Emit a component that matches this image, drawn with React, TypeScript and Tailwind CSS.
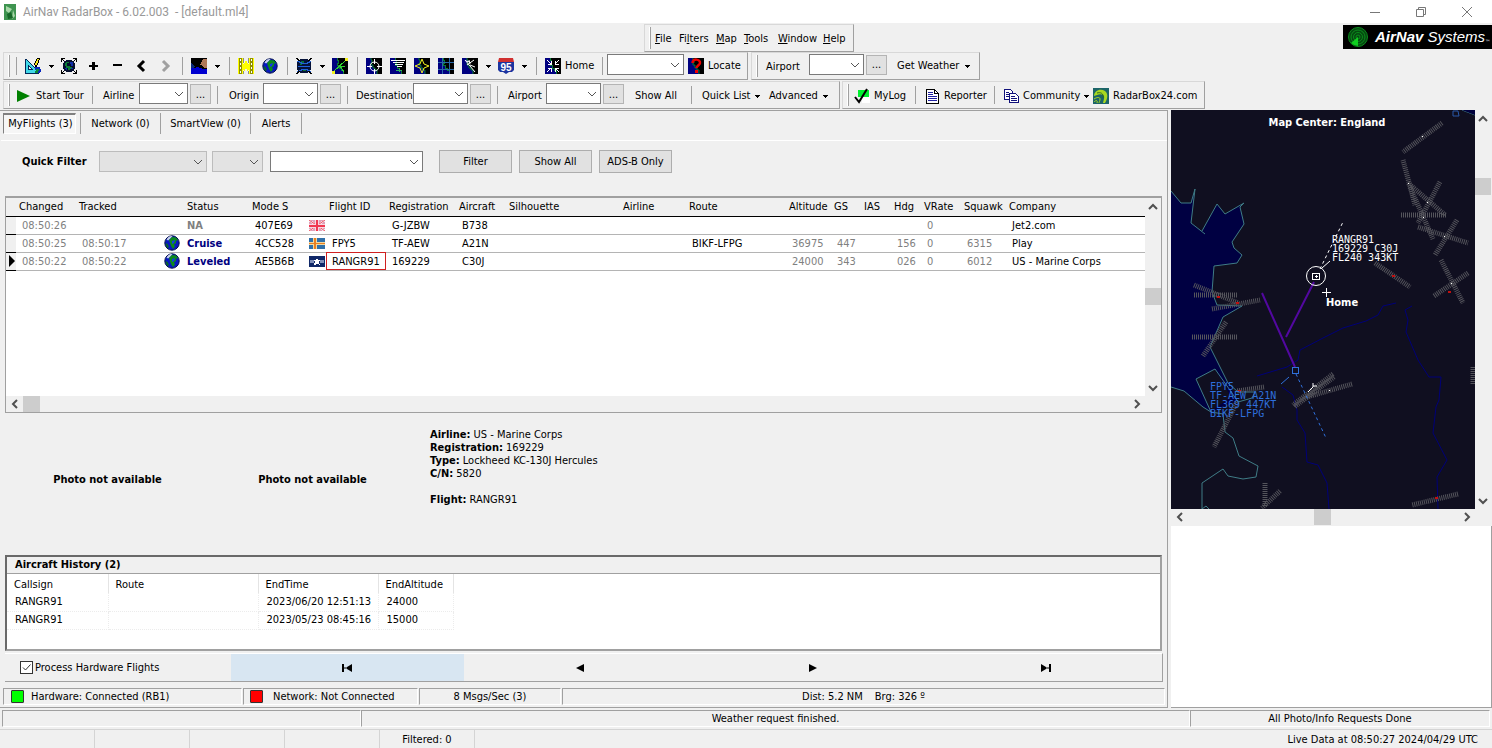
import type { ReactNode } from "react";
import { clsx } from "clsx";

/* ---------- small shared parts ---------- */

function Grip() {
  return <span className="ml-1 h-[22px] w-[2px] border-r border-[#a0a0a0] bg-white" />;
}

function Sep({ className }: { className?: string }) {
  return <span className={clsx("h-[18px] w-px shrink-0 bg-[#a0a0a0]", className)} />;
}

function Bar({ children, className }: { children: ReactNode; className?: string }) {
  return (
    <div
      className={clsx(
        "flex h-7 items-center border border-t-[#d8d8d8] border-r-[#a0a0a0] border-b-[#a0a0a0] border-l-[#d8d8d8]",
        className,
      )}
    >
      {children}
    </div>
  );
}

function Chevron({ dir = "down", className }: { dir?: "down" | "up" | "left" | "right"; className?: string }) {
  const d = {
    down: "M1 3l4 4 4-4",
    up: "M1 7l4-4 4 4",
    left: "M7 1L3 5l4 4",
    right: "M3 1l4 4-4 4",
  }[dir];
  return (
    <svg viewBox="0 0 10 10" className={clsx("size-[10px]", className)} fill="none" stroke="currentColor">
      <path d={d} />
    </svg>
  );
}

function Combo({ id, label, className, muted }: { id: string; label?: string; className: string; muted?: boolean }) {
  return (
    <span className={clsx("mt-px grid h-[21px] shrink-0 self-start", className)}>
      <select
        id={id}
        aria-label={label}
        className={clsx(
          "col-start-1 row-start-1 appearance-none border outline-none",
          muted ? "border-[#bcbcbc] bg-[#e3e3e3]" : "border-[#7a7a7a] bg-white",
        )}
      >
        <option value=""></option>
      </select>
      <Chevron className="pointer-events-none col-start-1 row-start-1 mr-1 self-center justify-self-end text-[#555]" />
    </span>
  );
}

function BarLabel({ htmlFor, className, children }: { htmlFor: string; className: string; children: ReactNode }) {
  return (
    <label htmlFor={htmlFor} className={clsx("shrink-0 pt-px whitespace-nowrap", className)}>
      {children}
    </label>
  );
}

function More({ label }: { label: string }) {
  return (
    <button
      aria-label={label}
      className="mt-[2px] ml-[2px] h-5 w-[21px] shrink-0 self-start border border-[#b4b4b4] bg-[#e1e1e1] leading-[14px]"
    >
      ...
    </button>
  );
}

function DropArrow() {
  return (
    <svg viewBox="0 0 5 3" className="h-[3px] w-[5px] shrink-0" shapeRendering="crispEdges">
      <path d="M0 0h5v1h-1v1h-1v1h-1v-1h-1v-1h-1z" />
    </svg>
  );
}

/* a toolbar button with a fixed slot so that neighbours keep their rhythm */
function Tool({ label, className, children }: { label?: string; className?: string; children: ReactNode }) {
  return (
    <button
      aria-label={label}
      className={clsx("flex h-6 shrink-0 items-center whitespace-nowrap", label && "justify-center", className)}
    >
      {children}
    </button>
  );
}

/* ---------- toolbar icons, 16 x 16 ---------- */

function Icon({ children, crisp = true }: { children: ReactNode; crisp?: boolean }) {
  return (
    <svg
      viewBox="0 0 16 16"
      className="size-4 shrink-0"
      fill="none"
      shapeRendering={crisp ? "crispEdges" : "auto"}
    >
      {children}
    </svg>
  );
}

function Chart() {
  return (
    <>
      <path fill="#000" d="M0 0h16v16H0z" />
      <path fill="#000080" d="M0 0h5v2h1v3H5v2h2v3h2v2h2v4H0z" />
      <path stroke="#087838" d="M5 0v2h1v3H5v2h2v3h2v2h2v4" />
    </>
  );
}

function Globe() {
  return (
    <Icon crisp={false}>
      <circle cx="8" cy="8" r="7.2" fill="#0818c0" stroke="#02104a" />
      <path d="M2.500 4.500C4 2 6 .8 8.500 1.200L6 4 4 5.500z" fill="#e8f0f8" opacity=".85" />
      <path d="M5 5l3-3 4 .500 2 2.500-2 1v2l-2 1.500 1 2-2 2.500-2-3-1-3z" fill="#0c8a1c" />
      <path d="M1.500 8l2 1 1.500 3-2 1z" fill="#0a6a20" />
      <path d="M8 6l3-1-1 3-2 1z" fill="#1438e8" />
    </Icon>
  );
}

function DrawIcon() {
  return (
    <Icon>
      <path fill="#40d8e8" d="M0 1h1l13 13v1H0z" />
      <path stroke="#002858" d="M.5 1v14.500H14M1 1l13 13" />
      <path fill="#f4f4f4" stroke="#002858" d="M3.500 7.500l4 4h-4z" />
      <path fill="#000" d="M12 0h3v2h-1v3h-1v2h-1v2h-2V7H9V5h1V3h1V1h1z" />
      <path fill="#f8e820" d="M12 1h2v1h-1v3h-1v2h-2V5h1V3h1z" />
      <path fill="#0828c0" d="M10 9h5v2h1v3h-1v1h-4z" />
      <path fill="#0a8a38" d="M11 11h3v2h-1v2h-3v-2h1z" />
    </Icon>
  );
}

function FitIcon() {
  return (
    <Icon>
      <path fill="#000" d="M0 0h4v1H2v1h1v1H2V2H1v2H0zM12 0h4v4h-1V2h-1v1h-1V2h1V1h-2zM0 12h1v2h1v-1h1v1H2v1h2v1H0zM15 12h1v4h-4v-1h2v-1h-1v-1h1v1h1z" />
      <path fill="#06102e" d="M5 2h6v1h2v2h1v6h-1v2h-2v1H5v-1H3v-2H2V5h1V3h2z" />
      <path fill="#0b8038" d="M5 4h3v1H6v3h3v1h2v2H9v1H7v-2H5V8H4V5h1z" />
      <path fill="#1030a8" d="M9 4h3v4h-2V6H9zM4 10h2v2H5v-1H4zM10 10h2v1h-2z" />
    </Icon>
  );
}

function DayNightIcon() {
  return (
    <Icon>
      <path fill="#000" d="M0 0h16v16H0z" />
      <path fill="#0000d0" d="M0 10h4l1-1h2l1 1h2l1 1h5v5H0z" />
      <path fill="#b07858" d="M12 1h4v9h-3l-3-3H9V6h1V4h1V2h1z" />
      <path fill="#0a2a78" d="M0 5l5 4-5 1z" />
    </Icon>
  );
}

function FilmIcon() {
  return (
    <Icon>
      <path fill="#909000" d="M0 0h5v16H0zM11 0h5v16h-5z" />
      <path fill="#ffff00" d="M0 0h1v16H0zM4 0h1v16H4zM11 0h1v16h-1zM15 0h1v16h-1z" />
      <path fill="#fff" d="M2 1h1v2H2zM2 5h1v2H2zM2 9h1v2H2zM2 13h1v2H2zM13 1h1v2h-1zM13 5h1v2h-1zM13 9h1v2h-1zM13 13h1v2h-1z" />
      <path fill="#ffff00" d="M5 6h1V5h1V3h2v2h1v1h1v6h-1v1H9v-2H7v2H6v-1H5z" />
      <path stroke="#303000" d="M5.500 0v5M10.500 0v5M5.500 13v3M10.500 13v3" opacity=".5" />
    </Icon>
  );
}

function WavesIcon() {
  return (
    <Icon>
      <path fill="#051238" d="M4 1h8v1h2v2h1v8h-1v2h-2v1H4v-1H2v-2H1V4h1V2h2z" />
      <path fill="#0a7038" d="M5 3h3v2H6v2H4V5h1zM6 11h4v2H7z" />
      <path stroke="#2060d8" d="M1 3.500h2v1h2v1h6v-1h2v-1h2M2 8.500h12M1 13.500h2v-1h2v-1h6v1h2v1h2" />
      <path fill="#000" d="M0 0h2v1h1v1h1v1H2V2H1V1H0zM14 0h2v1h-1v1h-1v1h-2V2h1V1h1zM0 15h1v-1h1v-1h2v1H3v1H2v1H0zM12 13h2v1h1v1h1v1h-2v-1h-1v-1h-1z" />
    </Icon>
  );
}

function RouteIcon() {
  return (
    <Icon>
      <Chart />
      <path stroke="#30d030" d="M1 14L14 2M8 8l4 6M8 8h5" />
      <path fill="#f0f020" d="M13 0h3v3h-3zM0 13h3v3H0z" />
    </Icon>
  );
}

function CrosshairIcon() {
  return (
    <Icon crisp={false}>
      <Chart />
      <circle cx="8.500" cy="8.500" r="4.500" stroke="#fff" />
      <path stroke="#fff" d="M8.500 1v5M8.500 11v5M1 8.500h5M11 8.500h5" />
    </Icon>
  );
}

function TrafficIcon() {
  return (
    <Icon>
      <Chart />
      <path stroke="#fff" d="M1 2.500h14M3 4.500h11M5 6.500h8M7 8.500h5" />
      <path stroke="#30b060" d="M6 12h6M9 10v4" />
    </Icon>
  );
}

function WaypointIcon() {
  return (
    <Icon crisp={false}>
      <Chart />
      <path stroke="#f0f020" d="M8 1l2 5 5 2-5 2-2 5-2-5-5-2 5-2z" />
    </Icon>
  );
}

function GridIcon() {
  return (
    <Icon>
      <Chart />
      <path stroke="#2868a8" d="M4.500 0v16M11.500 0v16M0 4.500h16M0 11.500h16" />
    </Icon>
  );
}

function AirwaysIcon() {
  return (
    <Icon crisp={false}>
      <Chart />
      <path stroke="#fff" d="M3 2l10 12M5 7l7-5M4 3l4 1M7 2l1 4M8 7l5 2" />
    </Icon>
  );
}

function ShieldIcon() {
  return (
    <Icon crisp={false}>
      <path fill="#1c34a0" d="M0 4h16v8l-2 2h-3l-3 2-3-2H2l-2-2z" />
      <path fill="#d03030" d="M1 0h14l1 4H0z" />
      <text x="8" y="13" textAnchor="middle" fill="#fff" className="font-['Liberation_Sans'] text-[10px] font-bold">
        95
      </text>
    </Icon>
  );
}

function HomeIcon() {
  return (
    <Icon>
      <Chart />
      <path stroke="#fff" d="M2 2l4 4M14 2l-4 4M2 14l4-4M14 14l-4-4M3 6.500h3.500V3M10 3v3.500h4M3 10h3.500v4M10 14v-4h4" />
    </Icon>
  );
}

function LocateIcon() {
  return (
    <Icon crisp={false}>
      <Chart />
      <path stroke="#f00000" strokeWidth="2.500" d="M4.500 5c0-5 8-4 7.500 0 0 2-3.500 2.500-3.500 5" />
      <path fill="#f00000" d="M7 12h3v3H7z" />
    </Icon>
  );
}

function LogIcon() {
  return (
    <Icon crisp={false}>
      <path fill="#fff" d="M8 8h8v7H8z" />
      <path fill="#00f030" d="M4 2h11v7H4z" />
      <path stroke="#000" strokeWidth="2" d="M1 9l4 5L13 1" />
    </Icon>
  );
}

function ReportIcon() {
  return (
    <Icon>
      <path fill="#fff" stroke="#000" d="M2.500 1.500h8l4 4v10h-12z" />
      <path stroke="#000" d="M10.500 1.500v4h4" />
      <path stroke="#2020a0" d="M4 4.500h5M4 6.500h5M4 8.500h9M4 10.500h9M4 12.500h9" />
    </Icon>
  );
}

function PagesIcon() {
  return (
    <Icon>
      <path fill="#fff" stroke="#10107a" d="M1.500 1.500h6l2 2v8h-8z" />
      <path fill="#fff" stroke="#10107a" d="M6.500 5.500h6l3 3v6h-9z" />
      <path stroke="#10107a" d="M3 4.500h3M3 6.500h3M3 8.500h3M8 8.500h4M8 10.500h6M8 12.500h6" />
    </Icon>
  );
}

function RadarBoxIcon() {
  return (
    <Icon crisp={false}>
      <path fill="#1c6468" d="M0 0h16v16H0z" />
      <path fill="#a8d820" d="M1 8c0-5 6-8 11-5 4 3 2 9 0 12h-2c1-4 2-7 0-8-3-2-6 0-9 1z" />
      <path stroke="#a8d820" d="M1 11c3-2 6-2 6 0s-1 3-1 4M1 14c2-2 4-2 3 1" />
      <path stroke="#306c20" d="M4 5c3-1 7 0 6 5" />
    </Icon>
  );
}

/* ---------- toolbars ---------- */

const menus = ["File", "Filters", "Map", "Tools", "Window", "Help"];
const menuSlots = ["w-6", "w-[37px]", "w-7", "w-[34px]", "w-[45px]", "w-[30px]"];

function MenuBar() {
  return (
    <Bar className="w-[210px]">
      <Grip />
      <nav className="flex pt-[2px] pl-1">
        {menus.map((name, i) => (
          <button key={name} className={clsx("shrink-0 text-left", menuSlots[i])}>
            {name === "Filters" ? (
              <>
                Fi<u>l</u>ters
              </>
            ) : (
              <>
                <u>{name[0]}</u>
                {name.slice(1)}
              </>
            )}
          </button>
        ))}
      </nav>
    </Bar>
  );
}

function Brand() {
  return (
    <div className="flex h-6 w-[149px] items-center bg-black pl-1 text-white">
      <svg viewBox="0 0 22 22" className="size-[22px] shrink-0" fill="none" stroke="#0a8c1c">
        <circle cx="11" cy="11" r="9.500" fill="#054a10" />
        <circle cx="11" cy="11" r="7" />
        <circle cx="11" cy="11" r="4.500" />
        <circle cx="11" cy="11" r="2" />
        <path d="M11 11L4 17l3 2 4 1z" fill="#10d020" stroke="none" />
      </svg>
      <span className="ml-[6px] font-['Liberation_Sans',sans-serif] text-[15px] whitespace-nowrap italic">
        <b>AirNav</b> Systems
      </span>
      <span className="self-end text-[6px]">™</span>
    </div>
  );
}

function Toolbars() {
  return (
    <header className="flex flex-col pl-[3px]">
      <div className="flex h-[29px] items-start">
        <div className="ml-[641px] pt-px">
          <MenuBar />
        </div>
        <div className="ml-auto pt-[2px]">
          <Brand />
        </div>
      </div>

      <div className="flex h-[29px] gap-[3px]">
        <Bar className="w-[745px]">
          <Grip />
          <Sep className="ml-[6px]" />
          <Tool label="Draw" className="ml-1 w-6"><DrawIcon /></Tool>
          <Tool label="Draw options" className="w-3"><DropArrow /></Tool>
          <Tool label="Fit map" className="w-6"><FitIcon /></Tool>
          <Tool label="Zoom in" className="w-6">
            <Icon><path fill="#000" d="M7 4h3v3h3v2h-3v3H7V9H4V7h3z" /></Icon>
          </Tool>
          <Tool label="Zoom out" className="w-6">
            <Icon><path fill="#000" d="M4 6h9v2H4z" /></Icon>
          </Tool>
          <Tool label="Back" className="w-6">
            <Icon crisp={false}><path stroke="#000" strokeWidth="3" d="M11 3L6 8l5 5" /></Icon>
          </Tool>
          <Tool label="Forward" className="w-6">
            <Icon crisp={false}><path stroke="#a0a0a0" strokeWidth="3" d="M6 3l5 5-5 5" /></Icon>
          </Tool>
          <Sep className="ml-[5px]" />
          <Tool label="Day and night" className="ml-1 w-6"><DayNightIcon /></Tool>
          <Tool label="Day and night options" className="w-3"><DropArrow /></Tool>
          <Sep className="ml-[6px]" />
          <Tool label="Replay" className="ml-1 w-6"><FilmIcon /></Tool>
          <Tool label="World" className="w-6"><Globe /></Tool>
          <Sep className="ml-[5px]" />
          <Tool label="Weather layer" className="ml-1 w-6"><WavesIcon /></Tool>
          <Tool label="Weather layer options" className="w-3"><DropArrow /></Tool>
          <Tool label="Routes" className="w-6"><RouteIcon /></Tool>
          <Sep className="ml-[5px]" />
          <Tool label="Airports" className="ml-1 w-6"><CrosshairIcon /></Tool>
          <Tool label="Labels" className="w-6"><TrafficIcon /></Tool>
          <Tool label="Waypoints" className="w-6"><WaypointIcon /></Tool>
          <Tool label="Grid" className="w-6"><GridIcon /></Tool>
          <Tool label="Airways" className="w-6"><AirwaysIcon /></Tool>
          <Tool label="Airways options" className="w-3"><DropArrow /></Tool>
          <Tool label="Roads" className="w-6"><ShieldIcon /></Tool>
          <Tool label="Roads options" className="w-3"><DropArrow /></Tool>
          <Sep className="ml-[6px]" />
          <Tool className="ml-2 w-[52px] gap-1"><HomeIcon />Home</Tool>
          <Sep className="ml-[5px]" />
          <Combo id="locate" label="Locate" className="ml-1 w-[77px]" />
          <Tool className="ml-1 w-[56px] gap-1"><LocateIcon />Locate</Tool>
        </Bar>
        <Bar className="w-[229px]">
          <Grip />
          <BarLabel htmlFor="wx-airport" className="ml-2 w-[43px]">Airport</BarLabel>
          <Combo id="wx-airport" className="w-[55px]" />
          <More label="Choose weather airport" />
          <Tool className="ml-[10px] w-[77px] gap-[6px]">Get Weather<DropArrow /></Tool>
        </Bar>
      </div>

      <div className="flex h-[29px] gap-[2px]">
        <Bar className="w-[837px] [&>button]:pt-[2px]">
          <Grip />
          <Tool className="ml-[7px] w-[70px] gap-[6px]">
            <svg viewBox="0 0 13 12" className="h-3 w-[13px]"><path fill="#008000" d="M0 0l13 6-13 6z" /></svg>
            Start Tour
          </Tool>
          <Sep className="ml-[5px]" />
          <BarLabel htmlFor="airline" className="ml-[10px] w-9">Airline</BarLabel>
          <Combo id="airline" className="w-[49px]" />
          <More label="Choose airline" />
          <Sep className="ml-[6px]" />
          <BarLabel htmlFor="origin" className="ml-[11px] w-[34px]">Origin</BarLabel>
          <Combo id="origin" className="w-[55px]" />
          <More label="Choose origin" />
          <Sep className="ml-[6px]" />
          <BarLabel htmlFor="destination" className="ml-2 w-[57px]">Destination</BarLabel>
          <Combo id="destination" className="w-[55px]" />
          <More label="Choose destination" />
          <Sep className="ml-[6px]" />
          <BarLabel htmlFor="airport" className="ml-[10px] w-[38px]">Airport</BarLabel>
          <Combo id="airport" className="w-[55px]" />
          <More label="Choose airport" />
          <Tool className="ml-[11px] w-[45px]">Show All</Tool>
          <Sep className="ml-[11px]" />
          <Tool className="ml-[10px] w-[60px] gap-[5px]">Quick List<DropArrow /></Tool>
          <Tool className="ml-[7px] w-[62px] gap-[5px]">Advanced<DropArrow /></Tool>
        </Bar>
        <Bar className="w-[363px] [&>button]:pt-[2px]">
          <Grip />
          <Tool className="ml-[5px] w-[54px] gap-1"><LogIcon />MyLog</Tool>
          <Sep className="ml-[7px]" />
          <Tool className="ml-2 w-[62px] gap-1"><ReportIcon />Reporter</Tool>
          <Sep className="ml-2" />
          <Tool className="ml-2 w-[82px] gap-1"><PagesIcon />Community<DropArrow /></Tool>
          <Tool className="ml-2 w-[104px] gap-1"><RadarBoxIcon />RadarBox24.com</Tool>
        </Bar>
      </div>
    </header>
  );
}

/* ---------- flight list ---------- */

const columns = [
  { name: "", width: "w-[10px]" },
  { name: "Changed", width: "w-[60px]" },
  { name: "Tracked", width: "w-[85px]" },
  { name: "", width: "w-[23px]" },
  { name: "Status", width: "w-[65px]" },
  { name: "Mode S", width: "w-[57px]" },
  { name: "", width: "w-[20px]" },
  { name: "Flight ID", width: "w-[60px]" },
  { name: "Registration", width: "w-[70px]" },
  { name: "Aircraft", width: "w-[50px]" },
  { name: "Silhouette", width: "w-[114px]" },
  { name: "Airline", width: "w-[66px]" },
  { name: "Route", width: "w-[100px]" },
  { name: "Altitude", width: "w-[45px]" },
  { name: "GS", width: "w-[30px]" },
  { name: "IAS", width: "w-[30px]" },
  { name: "Hdg", width: "w-[30px]" },
  { name: "VRate", width: "w-[40px]" },
  { name: "Squawk", width: "w-[45px]" },
  { name: "Company", width: "" },
];

const flights = [
  { changed: "08:50:26", tracked: "", status: "NA", modeS: "407E69", flag: "gb", id: "", reg: "G-JZBW", type: "B738", route: "", alt: "", gs: "", hdg: "", vrate: "0", squawk: "", company: "Jet2.com" },
  { changed: "08:50:25", tracked: "08:50:17", status: "Cruise", modeS: "4CC528", flag: "is", id: "FPY5", reg: "TF-AEW", type: "A21N", route: "BIKF-LFPG", alt: "36975", gs: "447", hdg: "156", vrate: "0", squawk: "6315", company: "Play" },
  { changed: "08:50:22", tracked: "08:50:22", status: "Leveled", modeS: "AE5B6B", flag: "us", id: "RANGR91", reg: "169229", type: "C30J", route: "", alt: "24000", gs: "343", hdg: "026", vrate: "0", squawk: "6012", company: "US - Marine Corps" },
];

function Flag({ code }: { code: string }) {
  return (
    <svg viewBox="0 0 16 11" className="h-[11px] w-4" shapeRendering="crispEdges">
      {code === "gb" && (
        <>
          <path fill="#e0a0b8" d="M0 0h16v11H0z" />
          <path stroke="#f4e4ec" strokeWidth="2" d="M0 0l16 11M16 0L0 11" />
          <path stroke="#f05060" d="M0 0l16 11M16 0L0 11" shapeRendering="auto" />
          <path fill="#f8d8e0" d="M6 0h4v11H6zM0 4h16v4H0z" />
          <path fill="#f03850" d="M7 0h2v11H7zM0 5h16v2H0z" />
        </>
      )}
      {code === "is" && (
        <>
          <path fill="#3070a8" d="M0 0h16v11H0z" />
          <path fill="#f0d8a0" d="M4 0h4v11H4zM0 4h16v3H0z" />
          <path fill="#e88020" d="M5 0h2v11H5zM0 5h16v1H0z" />
        </>
      )}
      {code === "us" && (
        <>
          <path fill="#102868" d="M0 0h16v11H0z" />
          <path fill="#8090b8" d="M1 4h4v3H1zM11 4h4v3h-4z" />
          <path fill="#fff" d="M8 2l1 2h2l-1 2 1 3-3-1-3 1 1-3-1-2h2z" />
        </>
      )}
    </svg>
  );
}

function FlightTable() {
  return (
    <table className="w-full table-fixed border-collapse bg-white text-left">
      <colgroup>
        {columns.map((c, i) => (
          <col key={i} className={c.width} />
        ))}
      </colgroup>
      <thead>
        <tr className="h-[18px] border-b border-black bg-[#f0f0f0]">
          {columns.map((c, i) => (
            <th key={i} className="p-0 pt-px pl-[3px] leading-4 font-normal whitespace-nowrap">
              {c.name}
            </th>
          ))}
        </tr>
      </thead>
      <tbody>
        {flights.map((f) => (
          <tr
            key={f.modeS}
            className="h-[18px] border-b border-[#b4b4b4] whitespace-nowrap [&>td]:p-0 [&>td]:pl-[6px] [&>td]:leading-[17px]"
          >
            <td className="border-b border-b-black bg-[#f0f0f0] !pl-0">
              {f.status === "Leveled" && (
                <svg viewBox="0 0 6 12" className="ml-[3px] h-3 w-[6px]">
                  <path d="M0 0l6 6-6 6z" />
                </svg>
              )}
            </td>
            <td className="text-[#808080]">{f.changed}</td>
            <td className="text-[#808080]">{f.tracked}</td>
            <td className="!pl-[3px]">{f.tracked && <Globe />}</td>
            <td className={clsx("!pl-[3px] font-bold", f.tracked ? "text-[#000080]" : "text-[#808080]")}>{f.status}</td>
            <td>{f.modeS}</td>
            <td className="!pl-[3px]"><Flag code={f.flag} /></td>
            <td className={clsx(f.id === "RANGR91" && "outline outline-1 -outline-offset-1 outline-[#d02020]")}>{f.id}</td>
            <td>{f.reg}</td>
            <td>{f.type}</td>
            <td />
            <td />
            <td>{f.route}</td>
            <td className="text-[#808080]">{f.alt}</td>
            <td className="text-[#808080]">{f.gs}</td>
            <td />
            <td className="text-[#808080]">{f.hdg}</td>
            <td className="text-[#808080]">{f.vrate}</td>
            <td className="text-[#808080]">{f.squawk}</td>
            <td>{f.company}</td>
          </tr>
        ))}
      </tbody>
    </table>
  );
}

function VScroll({ thumb }: { thumb: string }) {
  return (
    <div className="flex w-4 shrink-0 flex-col items-center bg-[#f0f0f0] text-[#505050]">
      <button aria-label="Scroll up" className="grid h-[17px] w-full place-items-center">
        <Chevron dir="up" className="stroke-2" />
      </button>
      <div className={clsx("h-[17px] w-full bg-[#cdcdcd]", thumb)} />
      <button aria-label="Scroll down" className="mt-auto grid h-[17px] w-full place-items-center">
        <Chevron dir="down" className="stroke-2" />
      </button>
    </div>
  );
}

function HScroll({ thumb }: { thumb: string }) {
  return (
    <div className="flex h-4 grow items-center bg-[#f0f0f0] text-[#505050]">
      <button aria-label="Scroll left" className="grid h-full w-[17px] place-items-center">
        <Chevron dir="left" className="stroke-2" />
      </button>
      <div className={clsx("h-full w-[17px] bg-[#cdcdcd]", thumb)} />
      <button aria-label="Scroll right" className="ml-auto grid h-full w-[17px] place-items-center">
        <Chevron dir="right" className="stroke-2" />
      </button>
    </div>
  );
}

const tabs = ["Network (0)", "SmartView (0)", "Alerts"];
const tabSlots = ["w-20", "w-[90px]", "w-[51px]"];

function Tabs() {
  return (
    <div role="tablist" className="flex h-[29px] pl-[2px]">
      <button
        role="tab"
        aria-selected="true"
        className="mt-[2px] mr-1 h-[21px] w-[73px] border border-t-2 border-t-[#808080] border-r-white border-b-white border-l-[#808080] bg-[#f6f6f6] pl-[2px] whitespace-nowrap"
      >
        MyFlights (3)
      </button>
      {tabs.map((t, i) => (
        <button
          key={t}
          role="tab"
          aria-selected="false"
          className={clsx("mt-[2px] h-[21px] border-l border-[#a0a0a0] whitespace-nowrap", tabSlots[i])}
        >
          {t}
        </button>
      ))}
      <Sep className="mt-[2px] h-[21px]" />
    </div>
  );
}

function QuickFilter() {
  return (
    <div className="flex h-[55px] items-start pt-[9px] pl-[17px]">
      <b className="w-[77px] leading-6">Quick Filter</b>
      <Combo id="filter-field" label="Filter field" className="w-[108px]" muted />
      <Combo id="filter-operator" label="Filter operator" className="ml-[5px] w-[51px]" muted />
      <Combo id="filter-value" label="Filter value" className="ml-[7px] w-[153px]" />
      <div className="ml-4 flex gap-[7px]">
        {["Filter", "Show All", "ADS-B Only"].map((t) => (
          <button key={t} className="h-[23px] w-[73px] border border-[#adadad] bg-[#e1e1e1]">
            {t}
          </button>
        ))}
      </div>
    </div>
  );
}

function Details() {
  return (
    <section className="flex h-[142px] items-start">
      <b className="mt-[58px] w-[205px] text-center leading-[18px]">Photo not available</b>
      <b className="mt-[58px] w-[205px] text-center leading-[18px]">Photo not available</b>
      <div className="mt-[15px] ml-[15px] leading-[13px]">
        <p><b>Airline:</b> US - Marine Corps</p>
        <p><b>Registration:</b> 169229</p>
        <p><b>Type:</b> Lockheed KC-130J Hercules</p>
        <p><b>C/N:</b> 5820</p>
        <p className="mt-[13px]"><b>Flight:</b> RANGR91</p>
      </div>
    </section>
  );
}

const history = [
  ["RANGR91", "", "2023/06/20 12:51:13", "24000"],
  ["RANGR91", "", "2023/05/23 08:45:16", "15000"],
];

function History() {
  return (
    <section className="mr-[5px] h-24 border-2 border-t-[#696969] border-r-[#a0a0a0] border-b-[#a0a0a0] border-l-[#696969] bg-white">
      <h2 className="h-[17px] border-b border-[#a0a0a0] bg-[#f0f0f0] pl-2 leading-4 font-bold">
        Aircraft History (2)
      </h2>
      <table className="w-[446px] table-fixed border-collapse text-left">
        <colgroup>
          <col className="w-[101px]" />
          <col className="w-[150px]" />
          <col className="w-[120px]" />
          <col className="w-[75px]" />
        </colgroup>
        <thead>
          <tr>
            {["Callsign", "Route", "EndTime", "EndAltitude"].map((h) => (
              <th key={h} className="border-r border-[#e4e4e4] p-0 pt-[3px] pl-[7px] leading-4 font-normal">
                {h}
              </th>
            ))}
          </tr>
        </thead>
        <tbody>
          {history.map((row) => (
            <tr key={row[2]} className="h-[18px]">
              {row.map((cell, i) => (
                <td key={i} className="border-r border-b border-dotted border-[#ececec] p-0 pl-2 leading-4 whitespace-nowrap">
                  {cell}
                </td>
              ))}
            </tr>
          ))}
        </tbody>
      </table>
    </section>
  );
}

function Navigator() {
  const glyphs = [
    { label: "First", d: "M1 0h2v8H1zM11 0v8L6 5v-.5H3v-1h3V3z" },
    { label: "Previous", d: "M10 0v8L2 4z" },
    { label: "Next", d: "M2 0v8l8-4z" },
    { label: "Last", d: "M9 0h2v8H9zM1 0v8l5-3v-.5h3v-1H6V3z" },
  ];
  return (
    <div className="mt-[2px] mr-1 flex h-[29px] border-r border-b border-[#a0a0a0] border-t border-t-white">
      <label className="flex w-[226px] items-center gap-[2px] pl-[15px]">
        <span className="grid size-[13px]">
          <input type="checkbox" defaultChecked className="col-start-1 row-start-1 appearance-none border border-[#333] bg-white" />
          <svg viewBox="0 0 13 13" className="pointer-events-none col-start-1 row-start-1" fill="none" stroke="#333">
            <path d="M3 6.500L5.500 9 10.500 3.500" />
          </svg>
        </span>
        Process Hardware Flights
      </label>
      <div className="grid grow grid-cols-4">
        {glyphs.map((g, i) => (
          <button key={g.label} aria-label={g.label} className={clsx("grid place-items-center", i === 0 && "bg-[#d8e6f2]")}>
            <svg viewBox="0 0 12 8" className="h-2 w-3">
              <path d={g.d} />
            </svg>
          </button>
        ))}
      </div>
    </div>
  );
}

function HardwareStatus() {
  const cell = "flex h-[17px] items-center border border-t-[#a0a0a0] border-r-white border-b-white border-l-[#a0a0a0]";
  return (
    <div className="mt-[6px] mr-[2px] mb-[2px] -ml-[2px] flex gap-px">
      <div className={clsx(cell, "w-[239px] pl-[7px]")}>
        <span className="size-[13px] rounded-[1px] border border-[#333] bg-[#00ff00]" />
        <span className="ml-[7px]">Hardware: Connected (RB1)</span>
      </div>
      <div className={clsx(cell, "w-[175px] pl-[6px]")}>
        <span className="size-[13px] rounded-[1px] border border-[#333] bg-[#ff0000]" />
        <span className="ml-[10px]">Network: Not Connected</span>
      </div>
      <div className={clsx(cell, "w-[142px] justify-center")}>8 Msgs/Sec (3)</div>
      <div className={clsx(cell, "grow justify-center gap-3")}>
        <span>Dist: 5.2 NM</span>
        <span>Brg: 326 º</span>
      </div>
    </div>
  );
}

/* ---------- map ---------- */

const runways = [
  "M271 13L232 42", "M232 50L244 95", "M237 73L274 105", "M269 72L247 113", "M230 105H275",
  "M239 77L262 129", "M247 117L297 133", "M286 110L264 145", "M270 150L292 193", "M297 163L263 186",
  "M204 153L239 177", "M23 175L67 193", "M23 185H67", "M41 199L89 190", "M21 227H66",
  "M55 212L32 246", "M93 277L66 281", "M66 292L43 337", "M162 264L122 295", "M163 267L123 297",
  "M181 274L136 287", "M94 373V397", "M109 381L91 398", "M287 384L241 395", "M302 257V275",
];

const hotspots = [[46, 187], [65, 193], [221, 166], [277, 182], [264, 388], [67, 281]];

function RadarMap() {
  return (
    <svg
      viewBox="0 0 304 399"
      preserveAspectRatio="xMidYMid slice"
      className="min-h-[399px] grow bg-[#100f20]"
      fill="none"
      role="img"
      aria-label="Radar map"
    >
      <path
        fill="#000042"
        d="M0 81l10 12h10l4-14-4 34 11 8 15-27 8 10 19-11-4 4 4 17-12 18 2 6 8 7-5 8-23 3-2 26 5 13 25 1-19 11-13 30 18 36 10 17-27 12-8-5-19-16-13-4z"
      />
      <path fill="#100f20" d="M25 269l19-10 16 28-20 14z" />
      <g stroke="#3f7c86">
        <path d="M0 81l10 12h10l4-14-4 34 14 11M31 121l15-27 8 10 19-11-4 4 4 17-12 18 2 6 8 7-5 8-23 3-2 26 5 13 25 1-19 11-13 30 18 36 10 9h17l-3 6-14 4-6-9-17-24-19 10 15 33" />
        <path d="M0 277l13 4 19 16 8 5 12 2 2 18 8 6 6 18 19 10-2 11-13 2-15-3-5-7-21 14v26l4-3 3 3" />
        <path d="M282 6v-5h5l1 5z" stroke="#2858a8" />
        <path d="M291 0l13 5" />
      </g>
      <path fill="#00003c" d="M291 0l13 5V0z" />
      <g stroke="#000078">
        <path d="M225 193l-13 3-5 9-12 6-23 7-18 9-25 13-2 10-11 7-30 9M111 277l11 8 4 15v10l8 13 2 29 11 3 9 18 2 26" />
        <path d="M241 196l-7 4 3 10-2 12 12 28 11 17h12l-2 23-3 7-3 26 14 27-10 17 1 32" />
      </g>
      <g stroke="#55555c" strokeWidth="5" strokeDasharray="1 1">
        {runways.map((d) => (
          <path key={d} d={d} />
        ))}
      </g>
      {hotspots.map(([x, y]) => (
        <rect key={`${x}-${y}`} x={x} y={y - 1} width="3" height="2" fill="#c01010" />
      ))}
      <g fill="#fff">
        {[[251, 26], [237, 73], [256, 92], [252, 107], [273, 126], [280, 173], [158, 280]].map(([x, y]) => (
          <rect key={x} x={x} y={y} width="1" height="1" />
        ))}
      </g>
      <path stroke="#5208a0" strokeWidth="2" d="M91 183l33 74M143 172l-28 55" />
      <path stroke="#fff" d="M137 282l5-5v-4M142 276h4" />

      <g stroke="#fff">
        <circle cx="145" cy="166" r="9.500" />
        <path shapeRendering="crispEdges" d="M141.500 163.500h7v6h-7zM145 165v3M143.500 166.500h3M155.500 178v9M151 182.500h9" />
        <path d="M151 158l8-7" />
        <path strokeDasharray="3 3" d="M149 159l23-47" />
      </g>
      <g stroke="#2f70dc">
        <path shapeRendering="crispEdges" d="M121.500 257.500h6v6h-6z" />
        <path d="M118 267l-8 7" />
        <path strokeDasharray="3 3" d="M125 264l30 64" />
      </g>

      <g className="font-['DejaVu_Sans_Mono',monospace] text-[10px]">
        <g fill="#fff">
          <text x="161" y="133">RANGR91</text>
          <text x="161" y="142">169229 C30J</text>
          <text x="161" y="151">FL240 343KT</text>
        </g>
        <g fill="#2f70dc">
          <text x="39" y="280">FPY5</text>
          <text x="39" y="289">TF-AEW A21N</text>
          <text x="39" y="298">FL369 447KT</text>
          <text x="39" y="307">BIKF-LFPG</text>
        </g>
      </g>
      <g fill="#fff" className="text-[11px] font-bold">
        <text x="156" y="16" textAnchor="middle">Map Center: England</text>
        <text x="155" y="196">Home</text>
      </g>
    </svg>
  );
}

function MapPane() {
  return (
    <aside className="flex w-[321px] shrink-0 flex-col">
      <div className="flex pr-px">
        <RadarMap />
        <VScroll thumb="mt-[51px]" />
      </div>
      <div className="flex pr-[17px]">
        <HScroll thumb="ml-[126px]" />
      </div>
      <div className="mt-px grow border-r border-b border-[#a0a0a0] bg-white" />
    </aside>
  );
}

/* ---------- window ---------- */

function TitleBar() {
  return (
    <div className="flex h-[23px] items-center bg-white pr-[2px] pl-1 text-[#999]">
      <svg viewBox="0 0 12 16" className="h-4 w-3">
        <path fill="#3f9450" d="M0 0h12v16H0z" />
        <path fill="#a8d8a8" d="M2 2l6 3-3 4-3-2zM9 6l2 6-3 3z" />
        <path fill="#176828" d="M3 10l4-2 2 6-5 1z" />
      </svg>
      <h1 className="ml-[7px] font-['Roboto','Noto_Sans',sans-serif] text-[12px] whitespace-pre">
        AirNav RadarBox - 6.02.003  - [default.ml4]
      </h1>
      <div className="ml-auto flex text-[#777]">
        <button aria-label="Minimize" className="grid w-[46px] place-items-center">
          <svg viewBox="0 0 10 10" className="size-[10px]" stroke="currentColor"><path d="M0 5.500h10" /></svg>
        </button>
        <button aria-label="Restore" className="grid w-[46px] place-items-center">
          <svg viewBox="0 0 10 10" className="size-[10px]" fill="none" stroke="currentColor">
            <path d="M.5 2.500h7v7h-7zM2.500 2.500v-2h7v7h-2" />
          </svg>
        </button>
        <button aria-label="Close" className="grid w-[46px] place-items-center">
          <svg viewBox="0 0 10 10" className="size-[10px]" stroke="currentColor"><path d="M0 0l10 10M10 0L0 10" /></svg>
        </button>
      </div>
    </div>
  );
}

function StatusBars() {
  const cell = "h-[17px] border border-t-[#a0a0a0] border-r-white border-b-white border-l-[#a0a0a0] text-center leading-[16px]";
  return (
    <footer>
      <div className="flex px-[2px] pt-[2px]">
        <div className={clsx(cell, "w-[359px]")} />
        <div className={clsx(cell, "grow")}>Weather request finished.</div>
        <div className={clsx(cell, "w-[300px]")}>All Photo/Info Requests Done</div>
      </div>
      <div className="mt-[2px] flex h-[19px] border-t border-[#d4d4d4] leading-[19px]">
        {["", "", "", "", "Filtered: 0"].map((t, i) => (
          <div key={i} className="w-[95px] border-r border-[#d4d4d4] text-center">
            {t}
          </div>
        ))}
        <div className="ml-auto pr-[14px]">Live Data at 08:50:27 2024/04/29 UTC</div>
      </div>
    </footer>
  );
}

export default function App() {
  return (
    <div className="flex min-h-screen flex-col bg-[#f0f0f0] font-['DejaVu_Sans_Condensed','Noto_Sans',sans-serif] text-[11px] leading-[14px] text-black">
      <TitleBar />
      <Toolbars />
      <main className="flex grow gap-[3px]">
        <div className="flex min-w-0 grow flex-col border-t border-r border-b border-[#a0a0a0] pl-px">
          <Tabs />
          <div className="flex grow flex-col border-t border-white pl-1">
            <QuickFilter />
            <section className="mr-[5px] flex grow flex-col border border-t-2 border-[#a0a0a0] bg-white">
              <div className="flex grow">
                <div className="min-w-0 grow bg-white">
                  <FlightTable />
                </div>
                <VScroll thumb="mt-[73px]" />
              </div>
              <div className="flex bg-[#f0f0f0] pr-4">
                <HScroll thumb="" />
              </div>
            </section>
            <Details />
            <History />
            <Navigator />
            <HardwareStatus />
          </div>
        </div>
        <MapPane />
      </main>
      <StatusBars />
    </div>
  );
}
